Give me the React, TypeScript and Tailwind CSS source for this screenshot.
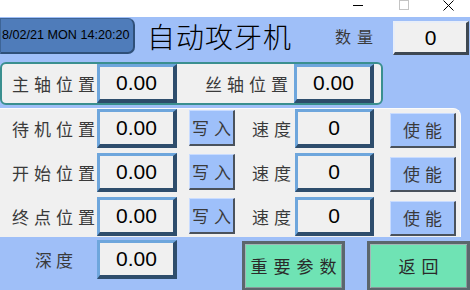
import type { ReactNode } from 'react'

const cjk = { fontFamily: '"Noto Sans CJK SC", "Noto Sans", sans-serif' }
const latin = { fontFamily: '"Liberation Sans", Arial, sans-serif' }

function Spaced({ text, gap }: { text: string; gap: number }) {
  return (
    <span className="flex" style={{ gap }}>
      {text.split('').map((c, i) => (
        <span key={i}>{c}</span>
      ))}
    </span>
  )
}

function ValueBox({ value, w = 'w-[80px]' }: { value: string; w?: string }) {
  return (
    <div
      className={`${w} h-[39px] shrink-0 flex items-center justify-center bg-[#f0f0f0] border-t-[3px] border-l-[3px] border-r-[4px] border-b-[4px] border-t-[#6ea6dc] border-l-[#6ea6dc] border-r-[#2e4d6c] border-b-[#2e4d6c] text-[21px] text-black`}
      style={latin}
    >
      {value}
    </div>
  )
}

function BlueButton({ label, className }: { label: string; className: string }) {
  return (
    <div
      className={`${className} shrink-0 flex items-center justify-center bg-[#9ec0fa] border-t border-l border-t-[#c9dcff] border-l-[#c9dcff] border-r-2 border-b-2 border-r-[#4a525c] border-b-[#4a525c] text-[17px] text-[#3a3a3a]`}
      style={cjk}
    >
      <Spaced text={label} gap={5} />
    </div>
  )
}

function GreenButton({ label, gap, className }: { label: string; gap: number; className: string }) {
  return (
    <div
      className={`${className} shrink-0 flex items-center justify-center bg-[#6fe3b4] border-[3px] border-[#5b666c] shadow-[inset_1px_1px_0_#a3b6b6,inset_-1px_-1px_0_#8a9a9a] text-[17px] text-[#2a2a2a]`}
      style={cjk}
    >
      <Spaced text={label} gap={gap} />
    </div>
  )
}

function Label({ children, className }: { children: ReactNode; className: string }) {
  return (
    <div className={`${className} shrink-0 flex items-center text-[17px] text-[#3a3a3a]`} style={cjk}>
      {children}
    </div>
  )
}

const rows = ['待机位置', '开始位置', '终点位置']

export default function App() {
  return (
    <div className="w-[470px] h-[290px] bg-[#9fbff8] overflow-hidden flex flex-col">
      {/* window title bar */}
      <div className="h-[17px] bg-white flex justify-end shrink-0">
        <div className="w-[46px] flex justify-center">
          <svg width="10" height="10">
            <line x1="0" y1="5.5" x2="10" y2="5.5" stroke="#000" strokeWidth="1" />
          </svg>
        </div>
        <div className="w-[46px] flex justify-center">
          <svg width="10" height="10">
            <rect x="0.5" y="0.5" width="9" height="9" fill="none" stroke="#c4c4c4" strokeWidth="1" />
          </svg>
        </div>
        <div className="w-[43px] flex justify-center pr-[1px]">
          <svg width="11" height="11">
            <path d="M0.5 0.5 L10.5 10.5 M10.5 0.5 L0.5 10.5" stroke="#000" strokeWidth="1" />
          </svg>
        </div>
      </div>

      {/* header */}
      <div className="h-[45px] flex shrink-0">
        <div
          className="mt-[1px] w-[135px] h-[36px] flex items-center pl-[1px] bg-[#4f7cba] border border-[#3d6496] border-r-2 border-b-2 border-r-[#2f5079] border-b-[#2f5079] rounded-r-[7px] text-[12.6px] text-black whitespace-nowrap overflow-hidden"
          style={latin}
        >
          8/02/21 MON 14:20:20
        </div>
        <div className="ml-[12px] mt-[1px] w-[188px] h-[36px] flex items-center text-[28px] font-light text-black" style={cjk}>
          <Spaced text="自动攻牙机" gap={1} />
        </div>
        <div className="w-[58px] h-[38px] flex items-center text-[16px] text-[#3a3a3a]" style={cjk}>
          <Spaced text="数量" gap={6} />
        </div>
        <div
          className="mt-[4px] w-[76px] h-[34px] flex items-center justify-center bg-[#f0f0f0] border-t-2 border-l-2 border-t-[#e8eef8] border-l-[#e8eef8] border-r-[3px] border-b-[3px] border-r-[#3e4852] border-b-[#3e4852] text-[21px] text-black"
          style={latin}
        >
          0
        </div>
      </div>

      {/* spindle panel */}
      <div className="w-[383px] h-[43px] shrink-0 flex items-center bg-[#f0f0f0] border-2 border-[#3a8f8f] rounded-[6px]">
        <Label className="w-[95px] pl-[10px]">
          <Spaced text="主轴位置" gap={5} />
        </Label>
        <ValueBox value="0.00" />
        <Label className="ml-[28px] w-[89px]">
          <Spaced text="丝轴位置" gap={5} />
        </Label>
        <ValueBox value="0.00" />
      </div>

      {/* positions panel */}
      <div className="mt-[3px] w-[461px] shrink-0 flex flex-col gap-[5px] pb-[1px] bg-[#f0f0f0] border-t border-r border-[#fbfbfb] rounded-tr-[8px]">
        {rows.map((r) => (
          <div key={r} className="h-[39px] flex items-start">
            <Label className="w-[97px] h-[39px] pl-[12px]">
              <Spaced text={r} gap={5} />
            </Label>
            <ValueBox value="0.00" />
            <BlueButton label="写入" className="ml-[12px] mt-[1px] w-[46px] h-[36px]" />
            <Label className="ml-[17px] w-[43px] h-[39px]">
              <Spaced text="速度" gap={5} />
            </Label>
            <ValueBox value="0" w="w-[79px]" />
            <BlueButton label="使能" className="ml-[16px] mt-[4px] w-[66px] h-[35px]" />
          </div>
        ))}
      </div>

      {/* bottom row */}
      <div className="mt-[3px] flex items-start">
        <Label className="w-[97px] h-[39px] pl-[35px]">
          <Spaced text="深度" gap={4} />
        </Label>
        <ValueBox value="0.00" />
        <GreenButton label="重要参数" gap={6} className="ml-[65px] mt-[1px] w-[103px] h-[50px]" />
        <GreenButton label="返回" gap={6} className="ml-[22px] mt-[1px] w-[103px] h-[50px]" />
      </div>
    </div>
  )
}
